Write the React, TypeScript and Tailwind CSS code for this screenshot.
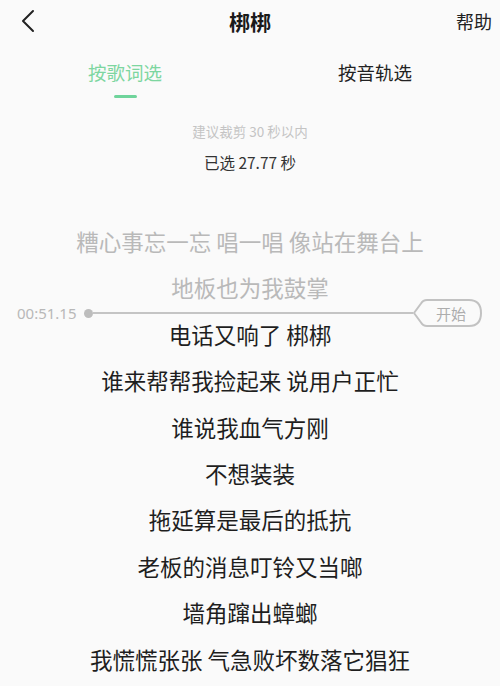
import React from "react";

const font = { fontFamily: '"Noto Sans CJK SC", "Noto Sans", sans-serif' };

const grayLines = ["糟心事忘一忘 唱一唱 像站在舞台上", "地板也为我鼓掌"];
const darkLines = [
  "电话又响了 梆梆",
  "谁来帮帮我捡起来 说用户正忙",
  "谁说我血气方刚",
  "不想装装",
  "拖延算是最后的抵抗",
  "老板的消息叮铃又当啷",
  "墙角蹿出蟑螂",
  "我慌慌张张 气急败坏数落它猖狂",
];

export default function App() {
  return (
    <div className="w-[500px] h-[686px] overflow-hidden bg-[#fafafa] flex flex-col" style={font}>
      {/* header */}
      <div className="h-[42px] flex items-center">
        <div className="w-[80px] pl-[20px] flex items-center">
          <svg width="16" height="24" viewBox="0 0 16 24" fill="none">
            <path d="M13 2 L3 12 L13 22" stroke="#222" strokeWidth="2" strokeLinecap="round" strokeLinejoin="round" />
          </svg>
        </div>
        <div className="flex-1 text-center text-[21px] font-bold text-[#1a1a1a] leading-none">梆梆</div>
        <div className="w-[80px] pr-[8px] text-right text-[18px] text-[#222] leading-none">帮助</div>
      </div>

      {/* tabs */}
      <div className="grid grid-cols-2 mt-[19px]">
        <div className="flex flex-col items-center">
          <div className="text-[18.5px] leading-[22px] text-[#7dd6a0]">按歌词选</div>
          <div className="mt-[12px] w-[23px] h-[3px] rounded-full bg-[#6fd49b]" />
        </div>
        <div className="flex flex-col items-center">
          <div className="text-[18.5px] leading-[22px] text-[#222]">按音轨选</div>
        </div>
      </div>

      <div className="mt-[24px] text-center text-[13.5px] leading-[18px] text-[#c4c4c4]">建议裁剪 30 秒以内</div>
      <div className="mt-[12px] text-center text-[15.5px] leading-[20px] text-[#333]">已选 27.77 秒</div>

      {/* lyrics */}
      <div className="relative mt-[46px] flex flex-col items-center">
        {grayLines.map((l, i) => (
          <div key={i} className="h-[46.4px] leading-[46.4px] text-[22.5px] text-[#b9b9b9] whitespace-pre">
            {l}
          </div>
        ))}
        {darkLines.map((l, i) => (
          <div key={i} className="h-[46.4px] leading-[46.4px] text-[22.5px] text-[#1e1e1e] whitespace-pre">
            {l}
          </div>
        ))}

        {/* slider overlay */}
        <div className="absolute left-0 right-0 top-[81px] h-[28px] flex items-center">
          <div className="w-[84px] pl-[17px] text-[15px] text-[#b8b8b8] leading-none" style={{ fontFamily: '"Noto Sans", sans-serif' }}>
            00:51.15
          </div>
          <div className="w-[9px] h-[9px] rounded-full bg-[#bdbdbd]" />
          <div className="flex-1 h-[2px] bg-[#c4c4c4]" />
          <div className="relative w-[70px] h-[28px] mr-[17px]">
            <svg width="70" height="28" viewBox="0 0 70 28" className="absolute inset-0">
              <path
                d="M1 14 L8 4.5 Q10 1 14 1 L56 1 Q68 1 68 14 Q68 27 56 27 L14 27 Q10 27 8 23.5 Z"
                fill="#fafafa"
                stroke="#c2c2c2"
                strokeWidth="2"
                strokeLinejoin="round"
              />
            </svg>
            <div className="absolute inset-0 pl-[6px] flex items-center justify-center text-[15px] text-[#adadad] leading-none">开始</div>
          </div>
        </div>
      </div>
    </div>
  );
}
